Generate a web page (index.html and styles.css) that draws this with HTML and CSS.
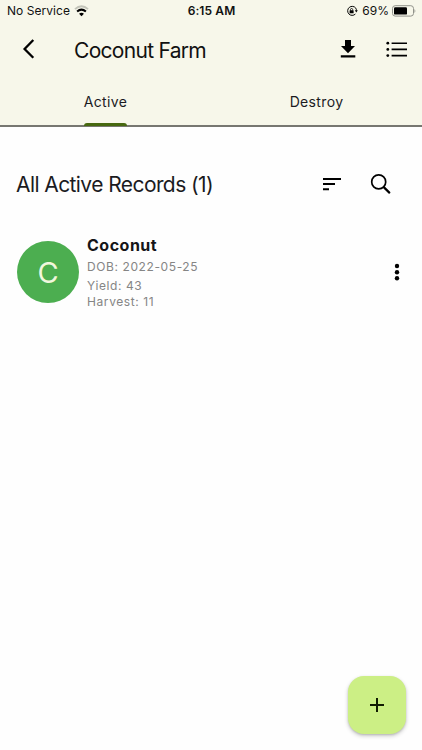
FILE: index.html
```html
<!DOCTYPE html>
<html lang="en">
<head>
<meta charset="utf-8">
<title>Coconut Farm</title>
<link rel="stylesheet" href="styles.css">
</head>
<body>
<main class="screen">
  <header class="header">
    <div class="status">
      <div class="status-left">
        <span class="carrier">No Service</span>
        <svg class="wifi" width="15" height="12" viewBox="0 0 16 12"><path d="M1 4Q8-2 15 4" fill="none" stroke="#c3c4b9" stroke-width="2"/><path d="M3.3 6.6Q8 2.6 12.7 6.6" fill="none" stroke="#000" stroke-width="2.2"/><path d="M5.4 8.9Q8 6.8 10.6 8.9L8 11.5Z"/></svg>
      </div>
      <span class="time">6:15 AM</span>
      <div class="status-right">
        <svg width="12" height="12" viewBox="0 0 12 12"><path d="M9.8 3.2A4.5 4.5 0 1 0 9.4 9" fill="none" stroke="#000"/><path d="M9.8 3.2q.7 1 .6 2.4" fill="none" stroke="#000"/><path d="M8.8 5.2h3l-1.5 2.2Z"/><rect x="3.6" y="5.3" width="4" height="3" rx=".4"/><path d="M4.5 5.5V4.6a1.1 1.1 0 0 1 2.2 0v.9" fill="none" stroke="#000" stroke-width=".8"/></svg>
        <span class="percent">69%</span>
        <svg class="battery" width="24" height="12" viewBox="0 0 24 12"><rect x=".5" y=".7" width="21" height="10.4" rx="2.7" fill="none" stroke="#92938b"/><rect x="2" y="2.2" width="13" height="7.4" rx="1.2"/><path d="M22.5 4q1.6 2 0 4Z" fill="#92938b"/></svg>
      </div>
    </div>
    <div class="appbar">
      <svg class="back" width="14" height="22" viewBox="0 0 14 22"><path d="M11.3 2 2.6 11l8.7 8.7" fill="none" stroke="#000" stroke-width="2.3"/></svg>
      <h1 class="title">Coconut Farm</h1>
      <svg class="download" width="16" height="20" viewBox="0 0 16 20"><path d="M5 1h6v6h4l-7 7.2L1 7h4ZM.8 16.2h14.5v2.2H.8Z"/></svg>
      <svg class="list" width="22" height="18" viewBox="0 0 22 18"><path d="M5.6 3.2H21M5.6 9.4H21M5.6 15.6H21" stroke="#000" stroke-width="1.6"/><circle cx="1.8" cy="3.2" r="1.4"/><circle cx="1.8" cy="9.4" r="1.4"/><circle cx="1.8" cy="15.6" r="1.4"/></svg>
    </div>
    <nav class="tabs">
      <div class="tab active"><span>Active</span></div>
      <div class="tab"><span>Destroy</span></div>
    </nav>
  </header>
  <section class="records-head">
    <h2 class="heading">All Active Records (1)</h2>
    <svg class="sort" width="20" height="14" viewBox="0 0 20 14"><path d="M1 2h18M1 7.1h12M1 12.2h6" stroke="#000" stroke-width="2"/></svg>
    <svg class="search" width="22" height="22" viewBox="0 0 22 22"><circle cx="8.7" cy="8.9" r="7" fill="none" stroke="#000" stroke-width="1.7"/><path d="m14 14.4 5.3 5.2" stroke="#000" stroke-width="2.2" stroke-linecap="round"/></svg>
  </section>
  <article class="record">
    <div class="avatar"><span>C</span></div>
    <div class="details">
      <h3 class="name">Coconut</h3>
      <p class="dob">DOB: 2022-05-25</p>
      <p class="yield">Yield: 43</p>
      <p class="harvest">Harvest: 11</p>
    </div>
    <svg class="more" width="6" height="18" viewBox="0 0 6 18"><circle cx="3" cy="3" r="2.2"/><circle cx="3" cy="9.2" r="2.2"/><circle cx="3" cy="15.3" r="2.2"/></svg>
  </article>
  <button class="fab" aria-label="Add"><svg width="16" height="16" viewBox="0 0 16 16"><path d="M8 1v14M1 8h14" stroke="#111c02" stroke-width="2"/></svg></button>
</main>
</body>
</html>
```
FILE: styles.css
```css
* { box-sizing: border-box; }
body { margin: 0; font-family: Inter, "Liberation Sans", sans-serif; color: #1b1b1f; }
h1, h2, h3, p { margin: 0; font-weight: 400; white-space: nowrap; }
svg { display: block; flex: none; }
.screen { position: relative; height: 750px; background: #fefefe; overflow: hidden; }
.header { height: 127px; background: #f7f7ea; border-bottom: 2px solid #777771; display: flex; flex-direction: column; }
.status { height: 22px; display: grid; grid-template-columns: 1fr auto 1fr; align-items: center; padding: 0 6px 0 7px; font-size: 12px; line-height: 22px; color: #111; }
.status-left, .status-right { display: flex; align-items: center; }
.status-left { gap: 4px; }
.status-right { justify-content: flex-end; }
.carrier { letter-spacing: .05px; }
.time { font-weight: 600; letter-spacing: .1px; }
.percent { margin: 0 3px 0 4px; }
.appbar { height: 54px; display: flex; align-items: center; padding: 0 14px 0 22px; }
.title { margin-left: 38px; padding-top: 2px; flex: 1; font-size: 21px; letter-spacing: -.7px; color: #111; }
.download { margin-right: 30px; }
.tabs { flex: 1; display: grid; grid-template-columns: 1fr 1fr; text-align: center; font-size: 14px; font-weight: 400; letter-spacing: .35px; line-height: 52px; }
.tab { height: 49px; }
.tab.active { display: flex; justify-content: center; }
.tab.active span { height: 49px; position: relative; }
.tab.active span::after { content: ""; position: absolute; left: 0; right: 0; top: 47px; height: 3px; background: #476810; border-radius: 3px 3px 0 0; }
.records-head { height: 114px; padding: 0 30px 0 16px; display: flex; align-items: center; }
.heading { flex: 1; font-size: 21px; letter-spacing: -.58px; }
.search { margin-left: 28px; }
.record { height: 76px; padding: 0 22px 0 17px; display: flex; align-items: center; margin-top: -7px; }
.avatar { width: 62px; height: 62px; border-radius: 50%; background: #4cae50; color: #f1f7dd; display: grid; place-items: center; padding-top: 1px; font-size: 29px; font-weight: 400; }
.details { flex: 1; margin-left: 8px; color: #858585; font-size: 12px; letter-spacing: .6px; line-height: 17px; }
.name { font-size: 16px; line-height: 22px; font-weight: 700; letter-spacing: .5px; color: #151518; }
.dob { line-height: 21px; }
.harvest { line-height: 16px; }
.fab { position: absolute; left: 348px; top: 676px; width: 58px; height: 58px; padding: 0; border: 0; border-radius: 16px; background: #ccef85; display: grid; place-items: center; box-shadow: 0 2px 4px #0003, 0 1px 2px #0002; }
```
